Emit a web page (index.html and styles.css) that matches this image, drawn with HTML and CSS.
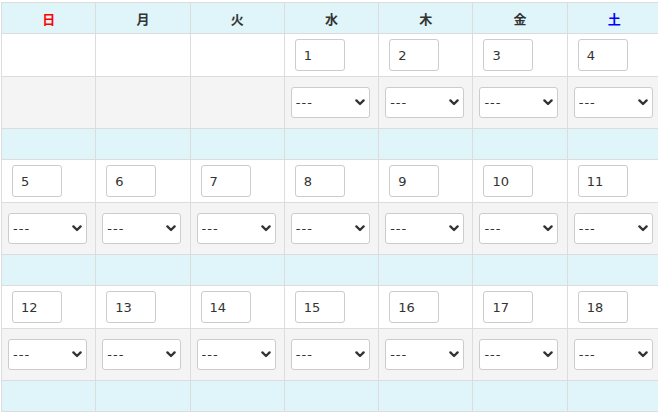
FILE: index.html
```html
<!DOCTYPE html>
<html lang="ja">
<head>
<meta charset="utf-8">
<title>カレンダー</title>
<link rel="stylesheet" href="styles.css">
</head>
<body>
<div class="wrap">
<table class="cal">
<thead>
<tr>
<th class="sun">日</th><th>月</th><th>火</th><th>水</th><th>木</th><th>金</th><th class="sat">土</th>
</tr>
</thead>
<tbody id="body"></tbody>
</table>
</div>
<script src="app.js"></script>
</body>
</html>
```
FILE: styles.css
```css
html, body {
  margin: 0;
  padding: 0;
  overflow: hidden;
  background: #fff;
}
.wrap {
  padding: 2px 0 0 1px;
}
.cal {
  border-collapse: collapse;
  table-layout: fixed;
  width: 661px;
  font-family: "DejaVu Sans", Verdana, sans-serif;
  color: #333;
}
.cal th,
.cal td {
  border: 1px solid #dcdcdc;
  padding: 0;
}
.cal th {
  height: 30px;
  background: #e0f5f9;
  font-family: "Noto Sans CJK JP", sans-serif;
  font-weight: bold;
  font-size: 13px;
  color: #333;
  text-align: center;
  vertical-align: middle;
}
.cal th.sun { color: #ff0000; }
.cal th.sat { color: #0000ff; }

.day-row td {
  background: #fff;
  padding: 5px 0 5px 10px;
  height: 32px;
  vertical-align: top;
}
.sel-row td {
  background: #f4f4f4;
  padding: 10px 0 10px 6px;
  height: 31px;
  vertical-align: top;
}
.gap-row td {
  background: #e0f5f9;
  height: 30px;
}
.day {
  display: block;
  box-sizing: border-box;
  width: 50px;
  height: 32px;
  margin: 0;
  padding: 0 0 0 8px;
  border: 1px solid #cccccc;
  border-radius: 3px;
  background: #fff;
  font-family: "DejaVu Sans", Verdana, sans-serif;
  font-size: 13px;
  color: #333;
  outline: none;
}
.sel-wrap {
  position: relative;
  display: block;
  width: 79px;
  height: 31px;
}
.sel {
  display: block;
  box-sizing: border-box;
  width: 79px;
  height: 31px;
  margin: 0;
  padding: 0 0 0 4px;
  border: 1px solid #cccccc;
  border-radius: 3px;
  background: #fff;
  -webkit-appearance: none;
  appearance: none;
  font-family: "DejaVu Sans", Verdana, sans-serif;
  font-size: 13px;
  letter-spacing: 1px;
  color: #333;
  outline: none;
}
.chev {
  position: absolute;
  right: 5px;
  top: 12px;
  width: 10px;
  height: 7px;
  pointer-events: none;
}
```
FILE: app.js
```javascript
(function () {
  var tbody = document.getElementById('body');
  var firstDow = 3;
  var days = 31;
  var chev = '<svg class="chev" viewBox="0 0 10 7"><polyline points="1.4,1.4 5,5 8.6,1.4" fill="none" stroke="#333" stroke-width="2.3" stroke-linecap="round" stroke-linejoin="round"/></svg>';
  var d = 1 - firstDow;
  while (d <= days) {
    var r1 = document.createElement('tr');
    r1.className = 'day-row';
    var r2 = document.createElement('tr');
    r2.className = 'sel-row';
    var r3 = document.createElement('tr');
    r3.className = 'gap-row';
    for (var i = 0; i < 7; i++, d++) {
      var c1 = document.createElement('td');
      var c2 = document.createElement('td');
      var c3 = document.createElement('td');
      if (d >= 1 && d <= days) {
        c1.innerHTML = '<input class="day" type="text" value="' + d + '">';
        c2.innerHTML = '<span class="sel-wrap"><select class="sel"><option>---</option></select>' + chev + '</span>';
      }
      r1.appendChild(c1);
      r2.appendChild(c2);
      r3.appendChild(c3);
    }
    tbody.appendChild(r1);
    tbody.appendChild(r2);
    tbody.appendChild(r3);
  }
})();
```
